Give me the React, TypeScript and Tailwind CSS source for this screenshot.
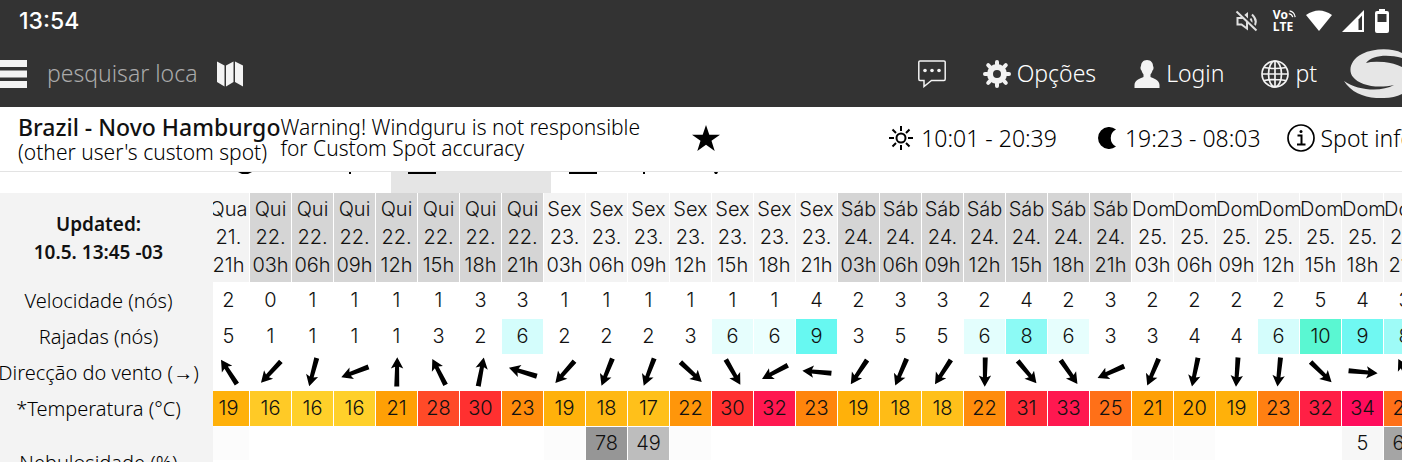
import React from "react";

type Column = {
  day: string;
  date: string;
  hour: string;
  wind: number;
  gust: number;
  gustColor?: string;
  angle: number;
  temp: number;
  tempColor: string;
  cloud?: number;
  cloudColor?: string;
};

const columns: Column[] = [
  { day: "Qua", date: "21.", hour: "21h", wind: 2, gust: 5, angle: 327, temp: 19, tempColor: "#ffb10a", cloudColor: "#fcfcfc" },
  { day: "Qui", date: "22.", hour: "03h", wind: 0, gust: 1, angle: 223, temp: 16, tempColor: "#ffca26" },
  { day: "Qui", date: "22.", hour: "06h", wind: 1, gust: 1, angle: 195, temp: 16, tempColor: "#ffd02a" },
  { day: "Qui", date: "22.", hour: "09h", wind: 1, gust: 1, angle: 249, temp: 16, tempColor: "#ffd02a" },
  { day: "Qui", date: "22.", hour: "12h", wind: 1, gust: 1, angle: 1, temp: 21, tempColor: "#ffa005" },
  { day: "Qui", date: "22.", hour: "15h", wind: 1, gust: 3, angle: 333, temp: 28, tempColor: "#ff4a28" },
  { day: "Qui", date: "22.", hour: "18h", wind: 3, gust: 2, angle: 11, temp: 30, tempColor: "#ff3030" },
  { day: "Qui", date: "22.", hour: "21h", wind: 3, gust: 6, gustColor: "#d4fdfc", angle: 287, temp: 23, tempColor: "#ff8c0c" },
  { day: "Sex", date: "23.", hour: "03h", wind: 1, gust: 2, angle: 221, temp: 19, tempColor: "#ffb10a", cloudColor: "#fcfcfc" },
  { day: "Sex", date: "23.", hour: "06h", wind: 1, gust: 2, angle: 202, temp: 18, tempColor: "#ffb813", cloud: 78, cloudColor: "#969696" },
  { day: "Sex", date: "23.", hour: "09h", wind: 1, gust: 2, angle: 201, temp: 17, tempColor: "#ffc01a", cloud: 49, cloudColor: "#bdbdbd" },
  { day: "Sex", date: "23.", hour: "12h", wind: 1, gust: 3, angle: 133, temp: 22, tempColor: "#ff960a", cloudColor: "#fcfcfc" },
  { day: "Sex", date: "23.", hour: "15h", wind: 1, gust: 6, gustColor: "#e6fefd", angle: 150, temp: 30, tempColor: "#ff3030" },
  { day: "Sex", date: "23.", hour: "18h", wind: 1, gust: 6, gustColor: "#ebfffe", angle: 242, temp: 32, tempColor: "#ff1850" },
  { day: "Sex", date: "23.", hour: "21h", wind: 4, gust: 9, gustColor: "#67f8f1", angle: 275, temp: 23, tempColor: "#ff850c" },
  { day: "Sáb", date: "24.", hour: "03h", wind: 2, gust: 3, angle: 214, temp: 19, tempColor: "#ffb10a" },
  { day: "Sáb", date: "24.", hour: "06h", wind: 3, gust: 5, angle: 203, temp: 18, tempColor: "#ffbc16" },
  { day: "Sáb", date: "24.", hour: "09h", wind: 3, gust: 5, angle: 213, temp: 18, tempColor: "#ffc01a" },
  { day: "Sáb", date: "24.", hour: "12h", wind: 2, gust: 6, gustColor: "#e3fefd", angle: 181, temp: 22, tempColor: "#ff8c0c" },
  { day: "Sáb", date: "24.", hour: "15h", wind: 4, gust: 8, gustColor: "#8cfaf5", angle: 140, temp: 31, tempColor: "#ff2b38" },
  { day: "Sáb", date: "24.", hour: "18h", wind: 2, gust: 6, gustColor: "#e6fefd", angle: 145, temp: 33, tempColor: "#ff1850" },
  { day: "Sáb", date: "24.", hour: "21h", wind: 3, gust: 3, angle: 246, temp: 25, tempColor: "#ff7018" },
  { day: "Dom", date: "25.", hour: "03h", wind: 2, gust: 3, angle: 203, temp: 21, tempColor: "#ffa005", cloudColor: "#fcfcfc" },
  { day: "Dom", date: "25.", hour: "06h", wind: 2, gust: 4, angle: 192, temp: 20, tempColor: "#ffa905", cloudColor: "#fcfcfc" },
  { day: "Dom", date: "25.", hour: "09h", wind: 2, gust: 4, angle: 184, temp: 19, tempColor: "#ffb10a" },
  { day: "Dom", date: "25.", hour: "12h", wind: 2, gust: 6, gustColor: "#d4fdfc", angle: 186, temp: 23, tempColor: "#ff8012" },
  { day: "Dom", date: "25.", hour: "15h", wind: 5, gust: 10, gustColor: "#5af7d2", angle: 134, temp: 32, tempColor: "#ff2045" },
  { day: "Dom", date: "25.", hour: "18h", wind: 4, gust: 9, gustColor: "#70f8f2", angle: 95, temp: 34, tempColor: "#ff0c5c", cloud: 5, cloudColor: "#f7f7f7" },
  { day: "Dom", date: "25.", hour: "21h", wind: 3, gust: 8, gustColor: "#9efbf7", angle: 333, temp: 25, tempColor: "#ff7018", cloud: 65, cloudColor: "#a5a5a5" },
];

// the label box is a bit wider than its column, it covers the start of the scrolled cells
function RowLabel({ children, span }: { children: React.ReactNode; span?: number }) {
  return (
    <th scope="row" rowSpan={span} className="p-0 font-light">
      <div
        className={`relative z-10 flex w-[213px] items-center justify-center whitespace-nowrap bg-[#f3f3f3] pr-4 pb-px font-['Noto_Sans',sans-serif] text-black ${
          span ? "h-[72px]" : "h-9"
        }`}
      >
        {children}
      </div>
    </th>
  );
}

function Cell({ color, children }: { color?: string; children?: React.ReactNode }) {
  return (
    <td
      className="border-r border-b border-white bg-clip-padding p-0 pb-px text-center"
      style={{ backgroundColor: color }}
    >
      {children}
    </td>
  );
}

function WindArrow({ angle }: { angle: number }) {
  return (
    <svg
      viewBox="0 0 30 30"
      className="mx-auto block size-[30px]"
      style={{ transform: `rotate(${angle}deg)` }}
    >
      <path d="M15 .3 L21.200 11.500 L17 9.800 L17.500 29.500 H12.500 L13 9.800 L8.800 11.500 Z" fill="#000" />
    </svg>
  );
}

function StatusBar() {
  return (
    <div className="flex h-[42px] items-center justify-between pr-[13px] pl-[19px] text-white">
      <span className="font-['Inter',sans-serif] text-[23px] font-medium">13:54</span>
      <div className="flex items-center gap-[10px]">
        <svg viewBox="0 0 24 24" className="size-6" fill="none" stroke="#e0e0e0" strokeWidth="2">
          <path d="M2.500 9v6.500h4l5.500 4V5L7 9zM15.500 9.500q2 3 0 5.500M17 5.500q7 6.500 1 13.500" />
          <path d="M2 1l21 20" stroke="#333" strokeWidth="3" />
          <path d="M1.500 2.500l20 19" />
        </svg>
        <div className="ml-1 flex flex-col font-['Open_Sans',sans-serif] text-[12px] leading-3 font-bold">
          <span className="flex">
            Vo
            <svg viewBox="0 0 10 10" className="h-[10px] w-2" fill="none" stroke="#fff" strokeWidth="1.500">
              <path d="M2 1q6 1 7 8M1 4.500q4 .5 5 4.500" />
            </svg>
          </span>
          <span>LTE</span>
        </div>
        <svg viewBox="0 0 26 22" className="h-[22px] w-[26px]">
          <path d="M0 5Q13-4 26 5L13 21Z" fill="#fff" />
        </svg>
        <svg viewBox="0 0 22 22" className="size-[22px]">
          <path d="M0 22L22 0V22Z" fill="#fff" />
          <path d="M16.500 9.500l3.500-4v14.500h-3.500z" fill="#333" />
        </svg>
        <svg viewBox="0 0 14 24" className="ml-px h-6 w-[14px]">
          <path d="M4 0h6v2h2q2 0 2 2v18q0 2-2 2H2q-2 0-2-2V4q0-2 2-2h2z" fill="#fff" />
          <path d="M2.500 5h9v8h-9z" fill="#333" />
        </svg>
      </div>
    </div>
  );
}

function NavBar() {
  return (
    <nav className="flex h-[65px] items-center overflow-hidden pb-[2px] text-[23px] text-white">
      <button type="button" aria-label="Menu" className="shrink-0">
        <svg viewBox="0 0 27 28" className="h-7 w-[27px]" fill="#f3f3f3">
          <path d="M0 0h27v7H0zM0 10.500h27v7H0zM0 21h27v7H0z" />
        </svg>
      </button>
      <input
        type="text"
        aria-label="pesquisar local"
        placeholder="pesquisar loca"
        className="ml-5 w-[160px] bg-transparent outline-none placeholder:text-[#aaa] placeholder:opacity-100"
      />
      <button type="button" aria-label="Mapa" className="ml-[10px] shrink-0">
        <svg viewBox="0 0 26 26" className="size-[26px]" fill="#f3f3f3">
          <path d="M0 .5L7.500 4.500V25.500L0 21zM9 4.500L16.500 .5V21L9 25.500zM18 .5L26 4.500V25.500L18 21z" />
        </svg>
      </button>
      <div className="ml-auto flex shrink-0 items-center">
        <button type="button" aria-label="Chat" className="mr-[37px]">
          <svg viewBox="0 0 28 28" className="size-7" fill="none" stroke="#f3f3f3" strokeWidth="1.500">
            <path d="M2 1H26Q27.200 1 27.200 2V19Q27.200 20.500 26 20.500H13.500L6 26.500V20.500H2Q.8 20.500 .8 19V2Q.8 1 2 1Z" />
            <g fill="#f3f3f3" stroke="none">
              <circle cx="7" cy="10.500" r="1.800" />
              <circle cx="14" cy="10.500" r="1.800" />
              <circle cx="21" cy="10.500" r="1.800" />
            </g>
          </svg>
        </button>
        <button type="button" className="mr-[38px] flex items-center gap-[6px]">
          <svg viewBox="-14 -14 28 28" className="size-7" stroke="#f3f3f3">
            <circle r="7" fill="none" strokeWidth="6" />
            <path
              d="M0-9.500V-12M0 9.500V12M-9.500 0H-12M9.500 0H12M6.700-6.700L8.800-8.800M-6.700 6.700L-8.800 8.800M6.700 6.700L8.800 8.800M-6.700-6.700L-8.800-8.800"
              strokeWidth="4"
              strokeLinecap="round"
            />
          </svg>
          <span>Opções</span>
        </button>
        <button type="button" className="mr-[37px] flex items-center gap-[6px]">
          <svg viewBox="0 0 26 28" className="h-7 w-[26px]" fill="#f3f3f3">
            <path d="M13 0C17 0 19 3 19 6C20 7 19.500 10 18.500 10.500C18 12.500 17 13.500 16.500 14.500V17C19 18.500 25.500 19.500 25.500 25V28H.5V25C.5 19.500 7 18.500 9.500 17V14.500C9 13.500 8 12.500 7.500 10.500C6.500 10 6 7 7 6C7 3 9 0 13 0Z" />
          </svg>
          <span>Login</span>
        </button>
        <button type="button" className="mr-[27px] flex items-center gap-[6px]">
          <svg viewBox="0 0 28 28" className="size-7" fill="none" stroke="#f3f3f3" strokeWidth="1.700">
            <circle cx="14" cy="14" r="13" />
            <ellipse cx="14" cy="14" rx="6.500" ry="13" />
            <path d="M14 1V27M1 14H27M3 7.500Q14 9.500 25 7.500M3 20.500Q14 18.500 25 20.500" />
          </svg>
          <span>pt</span>
        </button>
        <a href="#" aria-label="Windguru">
          <svg viewBox="0 0 58 49" className="h-[49px] w-[58px]" fill="#e6e6e6">
            <path d="M58 4C48-1 30-1 18 5C6 11 4 22 9 28C15 36 32 40 50 36C38 43 14 42 0 32C8 45 24 50 40 49Q50 49 58 45V18Q50 14 40 13Q28 12 22 14C28 6 44 5 58 9Z" />
          </svg>
        </a>
      </div>
    </nav>
  );
}

function SpotBar() {
  return (
    <header className="flex h-[65px] items-center overflow-hidden border-b border-[#e3e3e3] bg-white pb-[2px] pl-[18px] text-[21px] whitespace-nowrap text-black">
      <div className="pt-1">
        <h1 className="text-[23px] leading-[25px] font-medium text-[#111]">Brazil - Novo Hamburgo</h1>
        <p className="leading-[25px]">(other user's custom spot)</p>
      </div>
      <p className="leading-[21px]">
        Warning! Windguru is not responsible
        <br />
        for Custom Spot accuracy
      </p>
      <button type="button" aria-label="Favorito" className="ml-[52px] shrink-0">
        <svg viewBox="0 0 28 26" className="h-[26px] w-7">
          <path d="M14 0L17.300 9.800H28L19.500 15.800L22.700 26L14 19.800L5.300 26L8.500 15.800L0 9.800H10.700Z" />
        </svg>
      </button>
      <div className="-mr-3 ml-auto flex shrink-0 items-center text-[23px]">
        <div className="mr-10 flex items-center gap-2">
          <svg viewBox="0 0 24 24" className="size-6" fill="none" stroke="#000" strokeWidth="2">
            <circle cx="12" cy="12" r="4.500" />
            <path d="M12 0V5M12 19V24M0 12H5M19 12H24M3.500 3.500L7 7M17 17L20.500 20.500M20.500 3.500L17 7M7 17L3.500 20.500" />
          </svg>
          <span>10:01 - 20:39</span>
        </div>
        <div className="mr-[26px] flex items-center gap-2">
          <svg viewBox="0 0 20 22" className="h-[22px] w-5">
            <path d="M19 2.500A11 11 0 1 0 19 19.500A9.500 9.500 0 0 1 19 2.500Z" />
          </svg>
          <span>19:23 - 08:03</span>
        </div>
        <button type="button" className="flex items-center gap-[6px]">
          <svg viewBox="0 0 28 28" className="size-7" fill="none" stroke="#000" strokeWidth="1.700">
            <circle cx="14" cy="14" r="13" />
            <path d="M10.500 11.500H14.500V20M10 20.500H18.500" strokeWidth="2" />
            <circle cx="14" cy="7.500" r="1.500" fill="#000" stroke="none" />
          </svg>
          <span>Spot info</span>
        </button>
      </div>
    </header>
  );
}

// only the bottom edge of the tabs is left under the spot bar
function Tabs() {
  return (
    <div className="flex h-[21px] items-start bg-white pl-[221px]">
      <button type="button" aria-label="Mapa" className="h-full w-[170px]">
        <svg viewBox="0 0 170 21" className="h-[21px] w-full">
          <path d="M17 0H31L27 2H21zM128 0h2v2h-2z" />
        </svg>
      </button>
      <button type="button" aria-label="Tabela" className="h-full w-[160px] bg-[#e5e5e5]">
        <svg viewBox="0 0 160 21" className="h-[21px] w-full">
          <path d="M17 0h28v2H17z" />
        </svg>
      </button>
      <button type="button" aria-label="Arquivo" className="h-full w-[180px]">
        <svg viewBox="0 0 180 21" className="h-[21px] w-full">
          <path d="M18 0h28v2H18zM92 0h2v2h-2zM163 0h4l-1 2h-2z" />
        </svg>
      </button>
    </div>
  );
}

export default function App() {
  return (
    <div className="h-screen overflow-hidden bg-white font-['Noto_Sans',sans-serif] font-light text-[#111]">
      <div className="bg-[#333]">
        <StatusBar />
        <NavBar />
      </div>
      <SpotBar />
      <Tabs />
      <div className="overflow-hidden">
        <table className="w-0 table-fixed border-separate border-spacing-0 font-['Inter',sans-serif] text-[20px]">
          <colgroup>
            <col className="w-[208px]" />
            {columns.map((_, i) => (
              <col key={i} className="w-[42px]" />
            ))}
          </colgroup>
          <thead>
            <tr>
              <th className="p-0">
                <div className="relative z-10 flex h-[90px] w-[213px] flex-col items-center justify-center bg-[#f3f3f3] pr-4 font-['Noto_Sans',sans-serif] text-[19px] leading-7 font-semibold">
                  <span>Updated:</span>
                  <span>10.5. 13:45 -03</span>
                </div>
              </th>
              {columns.map((c, i) => (
                <th
                  key={i}
                  scope="col"
                  className={`border-r border-b border-white bg-clip-padding p-0 pt-[2px] align-top leading-7 font-light ${
                    c.day === "Qui" || c.day === "Sáb" ? "bg-[#d5d5d5]" : "bg-[#f3f3f3]"
                  }`}
                >
                  {c.day}
                  <br />
                  {c.date}
                  <br />
                  {c.hour}
                </th>
              ))}
            </tr>
          </thead>
          <tbody>
            <tr className="h-9">
              <RowLabel>Velocidade (nós)</RowLabel>
              {columns.map((c, i) => (
                <Cell key={i}>{c.wind}</Cell>
              ))}
            </tr>
            <tr className="h-9">
              <RowLabel>Rajadas (nós)</RowLabel>
              {columns.map((c, i) => (
                <Cell key={i} color={c.gustColor}>
                  {c.gust}
                </Cell>
              ))}
            </tr>
            <tr className="h-9">
              <RowLabel>Direcção do vento (→)</RowLabel>
              {columns.map((c, i) => (
                <Cell key={i}>
                  <WindArrow angle={c.angle} />
                </Cell>
              ))}
            </tr>
            <tr className="h-9">
              <RowLabel>*Temperatura (°C)</RowLabel>
              {columns.map((c, i) => (
                <Cell key={i} color={c.tempColor}>
                  {c.temp}
                </Cell>
              ))}
            </tr>
            <tr className="h-[34px]">
              <RowLabel span={2}>Nebulosidade (%)</RowLabel>
              {columns.map((c, i) => (
                <Cell key={i} color={c.cloudColor}>
                  {c.cloud}
                </Cell>
              ))}
            </tr>
            <tr className="h-[38px]">
              {columns.map((_, i) => (
                <Cell key={i} />
              ))}
            </tr>
          </tbody>
        </table>
      </div>
    </div>
  );
}
